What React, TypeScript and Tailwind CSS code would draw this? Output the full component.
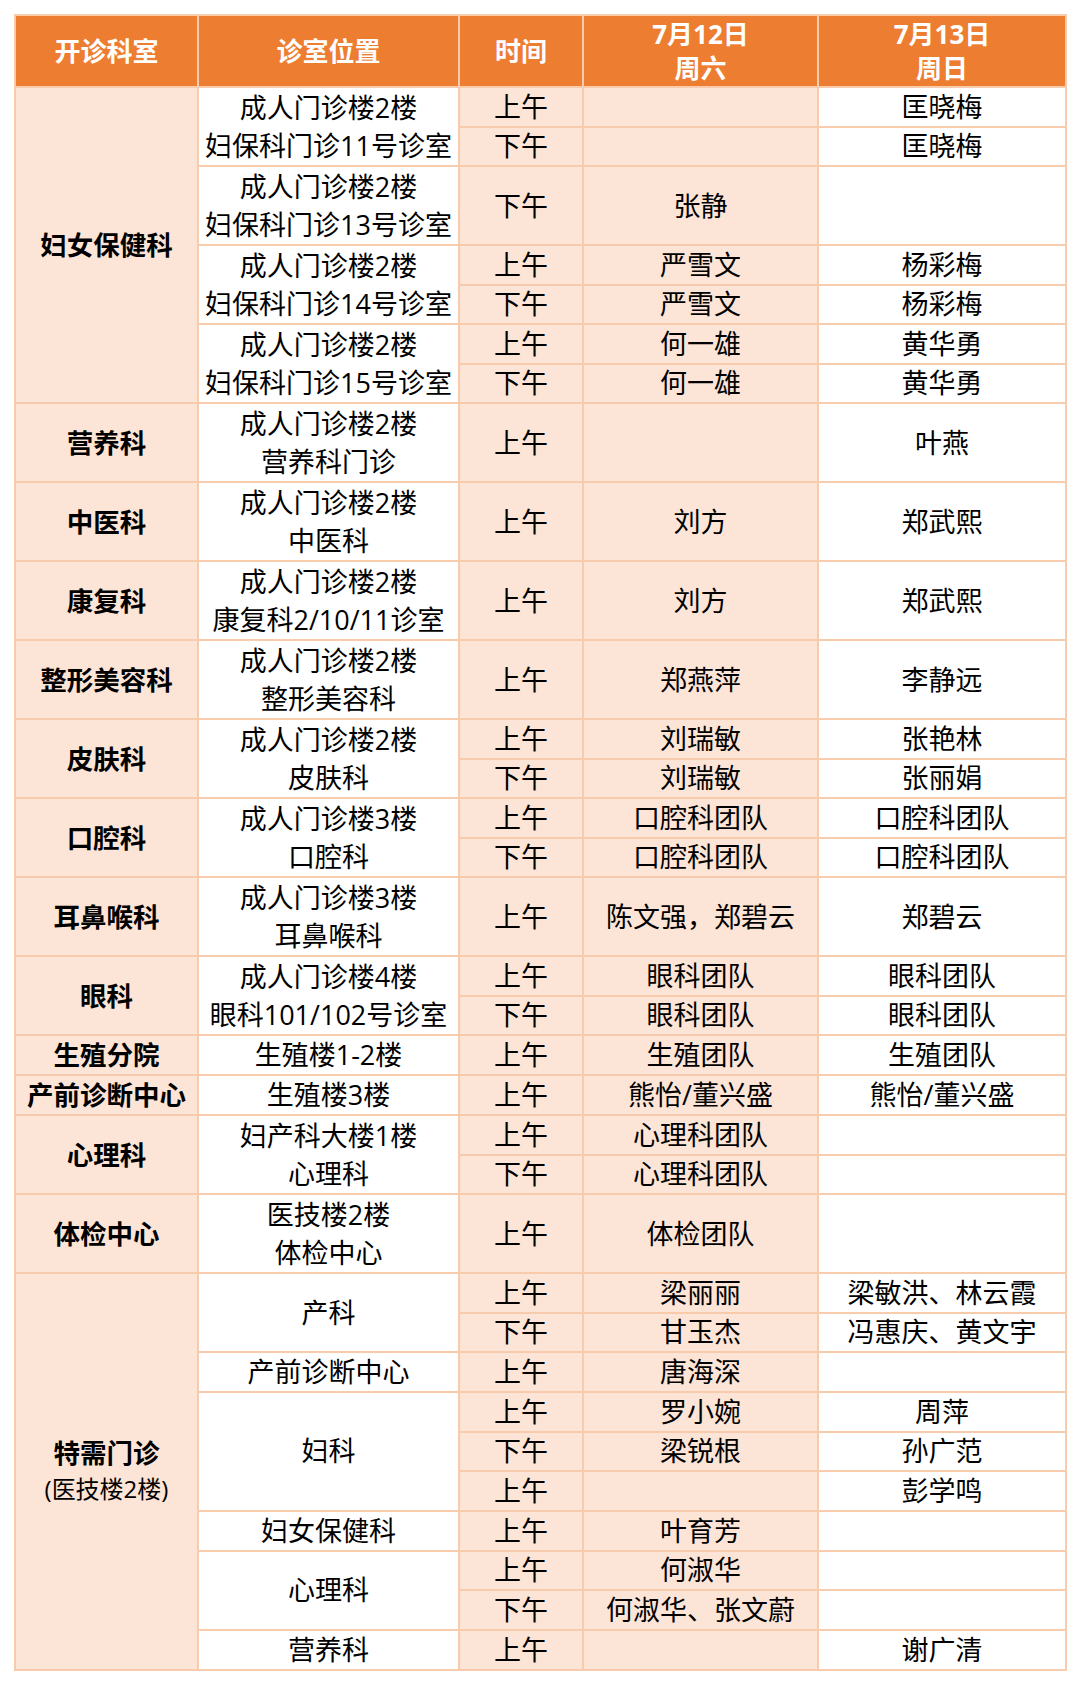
type Row = {
  dept?: { name: string; sub?: string; span: number };
  loc?: { lines: string[]; span: number };
  tall?: boolean;
  time: string;
  sat: string;
  sun: string;
};

const rows: Row[] = [
  { dept: { name: '妇女保健科', span: 7 }, loc: { lines: ['成人门诊楼2楼', '妇保科门诊11号诊室'], span: 2 }, time: '上午', sat: '', sun: '匡晓梅' },
  { time: '下午', sat: '', sun: '匡晓梅' },
  { loc: { lines: ['成人门诊楼2楼', '妇保科门诊13号诊室'], span: 1 }, tall: true, time: '下午', sat: '张静', sun: '' },
  { loc: { lines: ['成人门诊楼2楼', '妇保科门诊14号诊室'], span: 2 }, time: '上午', sat: '严雪文', sun: '杨彩梅' },
  { time: '下午', sat: '严雪文', sun: '杨彩梅' },
  { loc: { lines: ['成人门诊楼2楼', '妇保科门诊15号诊室'], span: 2 }, time: '上午', sat: '何一雄', sun: '黄华勇' },
  { time: '下午', sat: '何一雄', sun: '黄华勇' },
  { dept: { name: '营养科', span: 1 }, loc: { lines: ['成人门诊楼2楼', '营养科门诊'], span: 1 }, tall: true, time: '上午', sat: '', sun: '叶燕' },
  { dept: { name: '中医科', span: 1 }, loc: { lines: ['成人门诊楼2楼', '中医科'], span: 1 }, tall: true, time: '上午', sat: '刘方', sun: '郑武熙' },
  { dept: { name: '康复科', span: 1 }, loc: { lines: ['成人门诊楼2楼', '康复科2/10/11诊室'], span: 1 }, tall: true, time: '上午', sat: '刘方', sun: '郑武熙' },
  { dept: { name: '整形美容科', span: 1 }, loc: { lines: ['成人门诊楼2楼', '整形美容科'], span: 1 }, tall: true, time: '上午', sat: '郑燕萍', sun: '李静远' },
  { dept: { name: '皮肤科', span: 2 }, loc: { lines: ['成人门诊楼2楼', '皮肤科'], span: 2 }, time: '上午', sat: '刘瑞敏', sun: '张艳林' },
  { time: '下午', sat: '刘瑞敏', sun: '张丽娟' },
  { dept: { name: '口腔科', span: 2 }, loc: { lines: ['成人门诊楼3楼', '口腔科'], span: 2 }, time: '上午', sat: '口腔科团队', sun: '口腔科团队' },
  { time: '下午', sat: '口腔科团队', sun: '口腔科团队' },
  { dept: { name: '耳鼻喉科', span: 1 }, loc: { lines: ['成人门诊楼3楼', '耳鼻喉科'], span: 1 }, tall: true, time: '上午', sat: '陈文强，郑碧云', sun: '郑碧云' },
  { dept: { name: '眼科', span: 2 }, loc: { lines: ['成人门诊楼4楼', '眼科101/102号诊室'], span: 2 }, time: '上午', sat: '眼科团队', sun: '眼科团队' },
  { time: '下午', sat: '眼科团队', sun: '眼科团队' },
  { dept: { name: '生殖分院', span: 1 }, loc: { lines: ['生殖楼1-2楼'], span: 1 }, time: '上午', sat: '生殖团队', sun: '生殖团队' },
  { dept: { name: '产前诊断中心', span: 1 }, loc: { lines: ['生殖楼3楼'], span: 1 }, time: '上午', sat: '熊怡/董兴盛', sun: '熊怡/董兴盛' },
  { dept: { name: '心理科', span: 2 }, loc: { lines: ['妇产科大楼1楼', '心理科'], span: 2 }, time: '上午', sat: '心理科团队', sun: '' },
  { time: '下午', sat: '心理科团队', sun: '' },
  { dept: { name: '体检中心', span: 1 }, loc: { lines: ['医技楼2楼', '体检中心'], span: 1 }, tall: true, time: '上午', sat: '体检团队', sun: '' },
  { dept: { name: '特需门诊', sub: '(医技楼2楼)', span: 10 }, loc: { lines: ['产科'], span: 2 }, time: '上午', sat: '梁丽丽', sun: '梁敏洪、林云霞' },
  { time: '下午', sat: '甘玉杰', sun: '冯惠庆、黄文宇' },
  { loc: { lines: ['产前诊断中心'], span: 1 }, time: '上午', sat: '唐海深', sun: '' },
  { loc: { lines: ['妇科'], span: 3 }, time: '上午', sat: '罗小婉', sun: '周萍' },
  { time: '下午', sat: '梁锐根', sun: '孙广范' },
  { time: '上午', sat: '', sun: '彭学鸣' },
  { loc: { lines: ['妇女保健科'], span: 1 }, time: '上午', sat: '叶育芳', sun: '' },
  { loc: { lines: ['心理科'], span: 2 }, time: '上午', sat: '何淑华', sun: '' },
  { time: '下午', sat: '何淑华、张文蔚', sun: '' },
  { loc: { lines: ['营养科'], span: 1 }, time: '上午', sat: '', sun: '谢广清' },
];

const cell = 'border-2 border-[#f8cbad] text-center align-middle p-0';

export default function App() {
  return (
    <div className="min-h-[1682px] w-[1080px] bg-white pt-[14px] pl-[14px] font-['Open_Sans','Noto_Sans_CJK_SC',sans-serif] text-black">
      <table className="w-[1051px] table-fixed border-collapse border-2 border-[#f8cbad]">
        <colgroup>
          <col className="w-[183px]" />
          <col className="w-[261px]" />
          <col className="w-[124px]" />
          <col className="w-[235px]" />
          <col className="w-[248px]" />
        </colgroup>
        <thead>
          <tr className="h-[72px] bg-[#ed7d31] text-white text-[26px] font-bold leading-[34px]">
            <th className={cell}>开诊科室</th>
            <th className={cell}>诊室位置</th>
            <th className={cell}>时间</th>
            <th className={cell}>
              <div>7月12日</div>
              <div>周六</div>
            </th>
            <th className={cell}>
              <div>7月13日</div>
              <div>周日</div>
            </th>
          </tr>
        </thead>
        <tbody className="text-[27px] leading-[36px]">
          {rows.map((r, i) => (
            <tr key={i} className={r.tall ? 'h-[79px]' : 'h-[39.5px]'}>
              {r.dept && (
                <td rowSpan={r.dept.span} className={`${cell} bg-[#fce4d6]`}>
                  <div className="text-[26.5px] font-bold leading-[36px]">{r.dept.name}</div>
                  {r.dept.sub && <div className="text-[24px] leading-[36px]">{r.dept.sub}</div>}
                </td>
              )}
              {r.loc && (
                <td rowSpan={r.loc.span} className={`${cell} bg-white whitespace-nowrap leading-[38px]`}>
                  {r.loc.lines.map((l) => (
                    <div key={l}>{l}</div>
                  ))}
                </td>
              )}
              <td className={`${cell} bg-[#fce4d6]`}>{r.time}</td>
              <td className={`${cell} bg-[#fce4d6] whitespace-nowrap`}>{r.sat}</td>
              <td className={`${cell} bg-white whitespace-nowrap`}>{r.sun}</td>
            </tr>
          ))}
        </tbody>
      </table>
    </div>
  );
}
